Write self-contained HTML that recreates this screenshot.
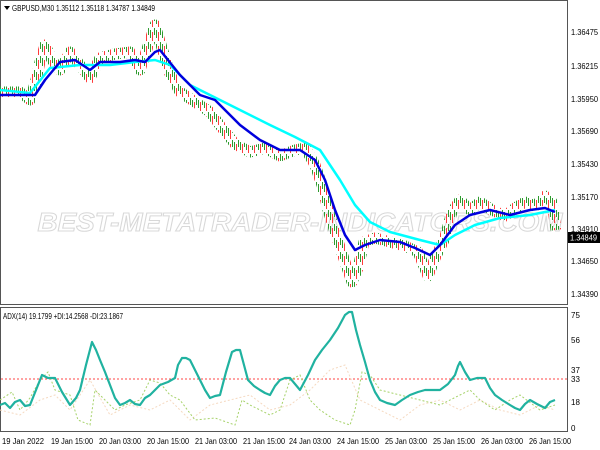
<!DOCTYPE html>
<html><head><style>
html,body{margin:0;padding:0;background:#fff;width:600px;height:450px;overflow:hidden}
svg{display:block;font-family:"Liberation Sans",sans-serif}
</style></head><body>
<svg width="600" height="450" viewBox="0 0 600 450">
<defs>
<pattern id="cp" width="6" height="14" patternUnits="userSpaceOnUse">
<rect x="0" y="2" width="1" height="8" fill="#2e9a2e"/>
<rect x="2" y="4" width="1" height="9" fill="#ff3b3b"/>
<rect x="4" y="0" width="1" height="7" fill="#2e9a2e"/>
</pattern>
</defs>
<rect x="0" y="0" width="600" height="450" fill="#fff"/>
<rect x="0.5" y="0.5" width="567" height="304" fill="none" stroke="#555"/>
<rect x="0.5" y="307.5" width="567" height="124" fill="none" stroke="#555"/>
<text x="300" y="231" text-anchor="middle" font-size="26" font-style="italic" font-weight="bold" fill="none" stroke="#d8d8d8" stroke-width="1" textLength="525" lengthAdjust="spacingAndGlyphs">BEST-METATRADER-INDICATORS.COM</text>
<polyline fill="none" stroke="url(#cp)" stroke-width="11" stroke-linejoin="round" points="0,92 20,92 30,100 36,80 40,62 45,45 52,60 60,70 70,52 80,65 90,78 100,58 115,54 130,52 140,70 150,40 155,25 162,48 170,74 180,92 195,102 210,112 222,128 235,144 250,152 265,148 280,156 295,150 305,148 315,165 322,185 328,210 336,235 345,262 352,282 358,268 364,242 375,238 390,242 405,246 418,252 428,276 436,256 444,240 452,212 460,200 470,210 480,202 492,210 505,216 515,208 525,202 535,206 545,196 552,202 556,230"/>
<polyline fill="none" stroke="#00ffff" stroke-width="2.5" stroke-linejoin="round" points="0,90 30,93 50,68 80,65 110,65 135,62 155,60 170,65 190,85 210,95 240,110 270,125 295,137 320,150 340,180 355,205 370,222 390,232 420,240 440,245 455,235 475,225 500,218 530,215 555,210"/>
<polyline fill="none" stroke="#0000dd" stroke-width="2.5" stroke-linejoin="round" points="0,95 35,95 45,80 60,62 75,60 90,70 100,62 120,62 135,60 145,62 155,52 160,50 168,60 180,75 200,95 215,100 230,115 240,125 260,140 280,150 300,150 315,160 325,180 335,210 345,235 355,250 365,245 380,240 400,242 415,248 430,255 440,245 455,225 470,215 490,210 510,215 530,210 545,208 555,212"/>
<path d="M4,6 L10,6 L7,10 Z" fill="#000"/>
<text x="12" y="11" font-size="8" fill="#000" textLength="143" lengthAdjust="spacingAndGlyphs">GBPUSD,M30  1.35112 1.35118 1.34787 1.34849</text>
<g font-size="8" fill="#000">
<text x="571" y="35" textLength="27" lengthAdjust="spacingAndGlyphs">1.36475</text>
<text x="571" y="69" textLength="27" lengthAdjust="spacingAndGlyphs">1.36215</text>
<text x="571" y="102" textLength="27" lengthAdjust="spacingAndGlyphs">1.35950</text>
<text x="571" y="134" textLength="27" lengthAdjust="spacingAndGlyphs">1.35690</text>
<text x="571" y="167" textLength="27" lengthAdjust="spacingAndGlyphs">1.35430</text>
<text x="571" y="200" textLength="27" lengthAdjust="spacingAndGlyphs">1.35170</text>
<text x="571" y="232" textLength="27" lengthAdjust="spacingAndGlyphs">1.34910</text>
<text x="571" y="264" textLength="27" lengthAdjust="spacingAndGlyphs">1.34650</text>
<text x="571" y="297" textLength="27" lengthAdjust="spacingAndGlyphs">1.34390</text>
<text x="571" y="318">75</text>
<text x="571" y="343">56</text>
<text x="571" y="373">37</text>
<text x="571" y="382">33</text>
<text x="571" y="405">18</text>
<text x="571" y="431">0</text>
</g>
<rect x="568" y="232" width="32" height="11" fill="#000"/>
<text x="570" y="240.5" font-size="8" fill="#fff" textLength="27" lengthAdjust="spacingAndGlyphs">1.34849</text>
<text x="3" y="319" font-size="8" fill="#000" textLength="120" lengthAdjust="spacingAndGlyphs">ADX(14) 19.1799 +DI:14.2568 -DI:23.1867</text>
<line x1="1" y1="379" x2="567" y2="379" stroke="#f44" stroke-dasharray="2 2"/>
<polyline fill="none" stroke="#f5d9c0" stroke-width="1" stroke-dasharray="2 2" points="0,410 20,415 40,400 55,395 70,410 90,380 110,415 130,405 150,410 170,400 190,420 210,405 230,400 250,395 270,410 290,405 310,390 330,370 345,365 360,400 380,410 400,420 420,405 440,400 460,410 480,400 500,410 520,415 540,405 555,410"/>
<polyline fill="none" stroke="#a6d26a" stroke-width="1" stroke-dasharray="2 2" points="0,400 12,392 20,410 30,398 40,380 48,372 55,390 70,395 78,420 90,425 95,390 100,395 115,410 125,405 140,400 150,380 160,383 170,395 180,400 195,420 215,418 235,425 242,400 250,405 270,415 280,410 290,380 300,375 310,400 320,410 335,420 350,425 355,410 362,372 370,375 380,390 400,395 420,400 440,405 460,395 470,390 480,400 495,410 510,400 520,395 540,410 555,405"/>
<polyline fill="none" stroke="#20b2a0" stroke-width="2.2" stroke-linejoin="round" points="0,405 5,403 10,408 15,402 20,400 25,406 30,405 36,390 42,375 48,378 55,378 62,392 70,405 76,398 80,390 86,365 92,342 96,350 100,360 105,372 110,385 115,398 120,405 125,403 130,400 135,404 140,405 145,398 150,395 155,390 160,385 168,382 175,378 178,365 182,358 186,358 190,360 195,370 200,380 205,390 210,398 215,396 220,395 226,372 232,352 236,350 240,350 244,365 248,380 254,386 260,390 265,393 270,395 275,386 280,380 285,378 290,378 295,384 300,390 308,375 315,360 322,350 330,340 338,328 345,315 349,312 352,312 356,330 360,345 365,362 370,380 375,392 380,400 387,403 395,405 402,400 410,395 418,392 425,390 432,390 440,390 448,384 455,375 458,366 460,362 465,372 470,380 477,378 485,378 490,388 495,395 502,400 510,405 515,408 520,410 525,404 530,400 537,404 545,408 550,402 555,400"/>
<g font-size="8" fill="#000">
<text x="2" y="444" textLength="42" lengthAdjust="spacingAndGlyphs">19 Jan 2022</text>
<text x="51" y="444" textLength="42" lengthAdjust="spacingAndGlyphs">19 Jan 15:00</text>
<text x="99" y="444" textLength="42" lengthAdjust="spacingAndGlyphs">20 Jan 03:00</text>
<text x="147" y="444" textLength="42" lengthAdjust="spacingAndGlyphs">20 Jan 15:00</text>
<text x="195" y="444" textLength="42" lengthAdjust="spacingAndGlyphs">21 Jan 03:00</text>
<text x="243" y="444" textLength="42" lengthAdjust="spacingAndGlyphs">21 Jan 15:00</text>
<text x="289" y="444" textLength="42" lengthAdjust="spacingAndGlyphs">24 Jan 03:00</text>
<text x="337" y="444" textLength="42" lengthAdjust="spacingAndGlyphs">24 Jan 15:00</text>
<text x="385" y="444" textLength="42" lengthAdjust="spacingAndGlyphs">25 Jan 03:00</text>
<text x="433" y="444" textLength="42" lengthAdjust="spacingAndGlyphs">25 Jan 15:00</text>
<text x="481" y="444" textLength="42" lengthAdjust="spacingAndGlyphs">26 Jan 03:00</text>
<text x="529" y="444" textLength="42" lengthAdjust="spacingAndGlyphs">26 Jan 15:00</text>
</g>
</svg>
</body></html>
